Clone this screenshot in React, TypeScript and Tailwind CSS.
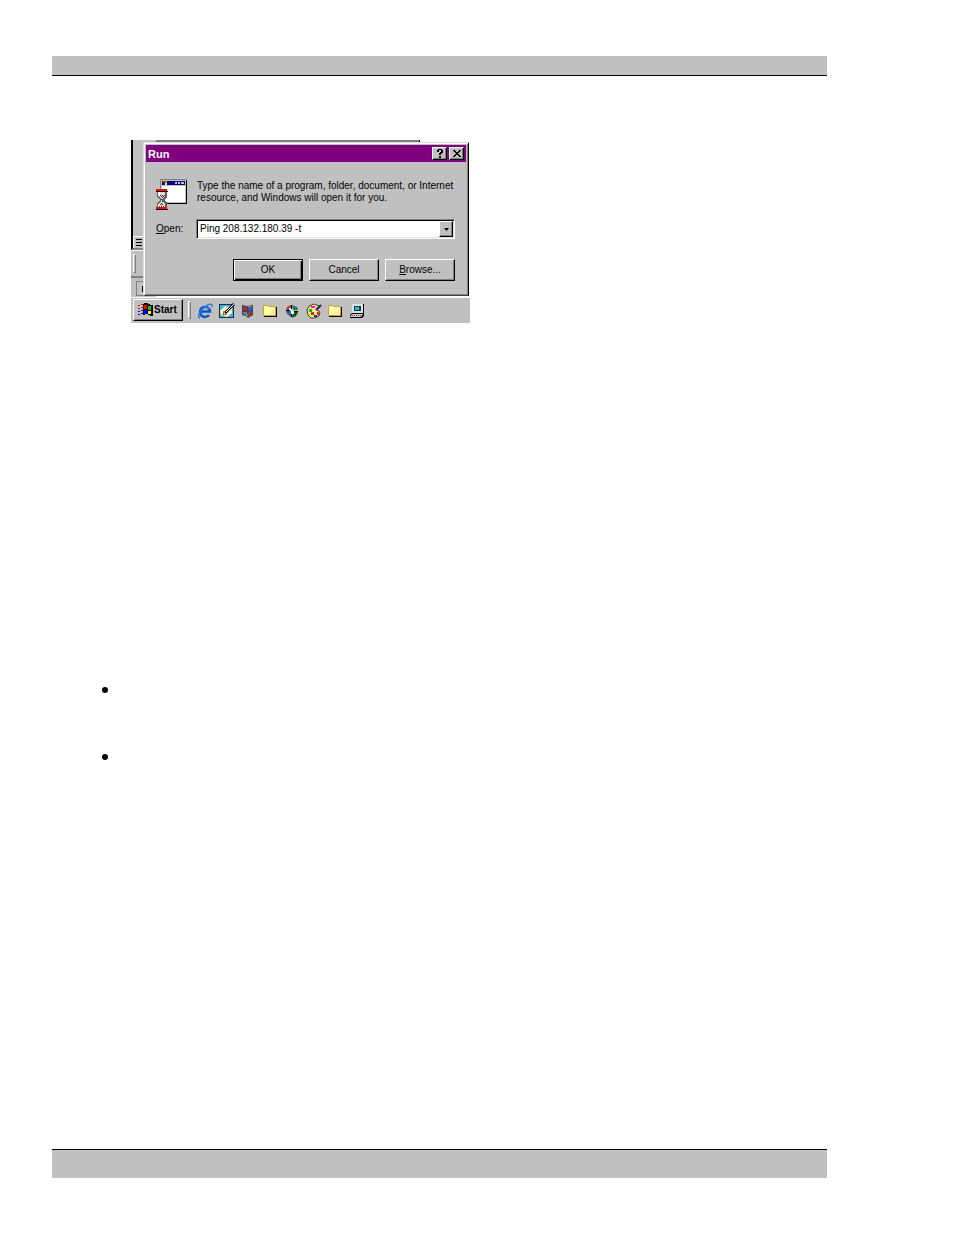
import type { ReactNode } from 'react'

const raised = 'border border-t-white border-l-white border-r-black border-b-black bg-[#c0c0c0] shadow-[inset_-1px_-1px_0_#808080]'

function ProgramIcon() {
  return (
    <svg className="w-8 h-8 shrink-0" viewBox="0 0 32 32" shapeRendering="crispEdges" aria-hidden="true">
      <path fill="#808080" d="M4 0h26v24H4z" />
      <path fill="#000" d="M30 1h1v24H5v-1h25z" />
      <path fill="#c0c0c0" d="M5 1h25v23H5z" />
      <path fill="#000080" d="M6 2h23v4H6z" />
      <path fill="#f00" d="M7 2h2v2H7z" />
      <path fill="#0c0" d="M9 2h2v2H9z" />
      <path fill="#00f" d="M7 4h2v2H7z" />
      <path fill="#ff0" d="M9 4h2v2H9z" />
      <path fill="#c0c0c0" d="M19 3h2v2h-2zM22 3h2v2h-2zM25 3h3v2h-3z" />
      <path fill="#fff" d="M6 7h23v16H6z" />
      <path fill="#000" d="M0 12h12v1H0zM0 30h12v1H0z" />
      <path fill="#f00" d="M0 10h11v2H0zM0 28h11v2H0z" />
      <path fill="#606060" d="M1 13h10v5l-3 3 3 3v4H1v-4l3-3-3-3z" />
      <path fill="#d8d8d8" d="M2 13h7v4l-3 3v2l3 3v3H2v-3l3-3v-2l-3-3z" />
      <path fill="#fff" d="M2 13h2v4H2zM2 25h2v3H2z" />
      <path fill="#303030" d="M4 16h1v1H4zM6 16h1v1H6zM8 16h1v1H8zM5 17h1v1H5zM7 17h1v1H7zM6 18h1v1H6zM5 20h1v1H5zM6 22h1v1H6zM5 24h1v1H5zM4 25h1v1H4zM6 25h1v1H6zM3 27h1v1H3zM5 27h1v1H5zM7 27h1v1H7z" />
    </svg>
  )
}

function WindowsFlag() {
  return (
    <svg className="w-4 h-4" viewBox="0 0 16 16" shapeRendering="crispEdges" aria-hidden="true">
      <path fill="#000" d="M6 2h1V1h4v1h2v1h3v11h-3v-1h-2v-1H8v1H6z" />
      <path fill="#f00" d="M7 3h3v4H7zM1 3h2v1H1zM4 2h2v1H4zM1 6h2v1H1zM4 5h2v1H4z" />
      <path fill="#0c0" d="M11 4h3v4h-3z" />
      <path fill="#00f" d="M7 8h3v4H7zM1 9h2v1H1zM4 8h2v1H4zM1 12h2v1H1zM4 11h2v1H4z" />
      <path fill="#ff0" d="M11 9h3v3h-3z" />
    </svg>
  )
}

function QuickIcon({ children }: { children: ReactNode }) {
  return (
    <svg className="w-4 h-4" viewBox="0 0 16 16" aria-hidden="true">
      {children}
    </svg>
  )
}

function Folder() {
  return (
    <QuickIcon>
      <path fill="#000" d="M2 13h12V4h1v10H2z" />
      <path fill="#c8a030" d="M1 4V3l1-1h4l1 1h7v10H1z" />
      <path fill="#ffffa8" d="M2 3h4l1 1h6v8H2z" />
      <path fill="#ffd8a0" d="M11 7h1v1h-1zM10 8h1v1h-1zM9 9h1v1H9zM11 9h1v1h-1zM8 10h1v1H8zM10 10h1v1h-1zM12 10h1v1h-1zM7 11h1v1H7zM9 11h1v1H9zM11 11h1v1h-1z" />
    </QuickIcon>
  )
}

const shortcuts = [
  {
    label: 'Internet Explorer',
    icon: (
      <QuickIcon>
        <path fill="none" stroke="#1058c8" strokeWidth="2.6" d="M4 8.500h9A5 5 0 1 0 12 12" />
        <path fill="none" stroke="#48b8f8" strokeWidth="1" d="M4 7.500A5 4.500 0 0 1 12 6" />
        <path fill="none" stroke="#1878e0" strokeWidth="1.300" d="M3 15C-1 14 4 6 9 3c4-3 7-2 6 1" />
      </QuickIcon>
    ),
  },
  {
    label: 'Outlook Express',
    icon: (
      <QuickIcon>
        <path fill="#103048" d="M0 1h15v14H0z" />
        <path fill="#48b0e8" d="M1 2h13v12H1z" />
        <path fill="#fff8c8" d="M1 8l5-5 7 2v5l-5 4-6-2z" />
        <path fill="none" stroke="#000" strokeWidth="2.500" d="M6 10l9-9" />
        <path fill="none" stroke="#fff" d="M7 9l8-8" />
        <path fill="none" stroke="#806010" d="M5 8l-1 4 4-1" />
      </QuickIcon>
    ),
  },
  {
    label: 'Windows',
    icon: (
      <QuickIcon>
        <path fill="#404050" d="M2 2l5 1 6-1v10l-5 3-2-2-4-1z" />
        <path fill="#a82830" d="M3 3l4 1v4H3z" />
        <path fill="#3058d0" d="M8 4l4-1v4L8 8z" />
        <path fill="#6880b0" d="M3 9h4v3l-4-1z" />
        <path fill="#a03838" d="M8 9l4-1v3l-4 3z" />
        <path fill="#68a060" d="M8 3h4v1H8zM6 11h2v2H6z" />
      </QuickIcon>
    ),
  },
  { label: 'Folder', icon: <Folder /> },
  {
    label: 'Channels',
    icon: (
      <QuickIcon>
        <path fill="#b83838" d="M2 7l1-3 4-2v5z" />
        <path fill="#188058" d="M8 2l5 2 1 3H9z" />
        <path fill="#206898" d="M2 8h5v6l-4-3z" />
        <path fill="#184818" d="M9 9h5l-2 4-4 2z" />
        <path fill="#f8f8f8" d="M5 5h3v3H5zM7 8h3v3H7z" />
        <path fill="#000" d="M7 2h1v4H7zM2 7h4v1H2zM10 8h4v1h-4zM7 11h1v3H7z" />
      </QuickIcon>
    ),
  },
  {
    label: 'Paint',
    icon: (
      <QuickIcon>
        <path fill="#f8f080" stroke="#484000" d="M1 7l2-4 5-2 5 2-2 4 3 2-1 4-4 2H5l-3-3z" />
        <path fill="#f0f" d="M5 3h4v2H5z" />
        <path fill="#0b2" d="M3 6h3v3H3z" />
        <path fill="#e22" d="M5 9h3v3H5zM11 9h2v3h-2z" />
        <path fill="#22e" d="M8 12h3v2H8z" />
        <path fill="none" stroke="#202060" strokeWidth="2" d="M15 2l-5 5" />
      </QuickIcon>
    ),
  },
  { label: 'Documents', icon: <Folder /> },
  {
    label: 'Computer',
    icon: (
      <QuickIcon>
        <path fill="#000" d="M3 1h12v10H3zM1 12l2-2h12v3l-2 2H1z" />
        <path fill="#e0e0e0" d="M3 1h11v9H3z" />
        <path fill="#004050" d="M5 3h7v5H5z" />
        <path fill="#18c8c8" d="M6 4h4v3H6z" />
        <path fill="#d0d0d0" d="M3 11h11l-2 3H1z" />
        <path stroke="#404040" strokeDasharray="1 1" d="M3 12.500h9" />
      </QuickIcon>
    ),
  },
]

function RunDialog() {
  return (
    <section
      role="dialog"
      aria-label="Run"
      className="absolute left-3 top-0.5 right-px h-[154px] p-px border border-t-[#dfdfdf] border-l-[#dfdfdf] border-r-black border-b-[#404040] bg-[#c0c0c0] shadow-[inset_1px_1px_0_#fff,inset_-1px_-1px_0_#808080]"
    >
      <header className="m-px flex h-[17px] items-center bg-[#800080] px-0.5">
        <h1 className="flex-1 text-[11px] leading-4 font-bold text-white">Run</h1>
        <button type="button" aria-label="Help" className={`flex h-[13px] w-[15px] items-center justify-center ${raised}`}>
          <svg className="w-[6px] h-[9px]" viewBox="0 0 6 9" shapeRendering="crispEdges" aria-hidden="true">
            <path d="M1 0h4v1h1v3H5v1H4v1H2V4h1V3h1V1H2v2H0V1h1zM2 7h2v2H2z" />
          </svg>
        </button>
        <button type="button" aria-label="Close" className={`ml-0.5 flex h-[13px] w-[15px] items-center justify-center ${raised}`}>
          <svg className="w-2 h-[7px]" viewBox="0 0 8 7" shapeRendering="crispEdges" aria-hidden="true">
            <path d="M0 0h2v1h1v1h2V1h1V0h2v1H7v1H6v1H5v1h1v1h1v1h1v1H6V6H5V5H3v1H2v1H0V6h1V5h1V4h1V3H2V2H1V1H0z" />
          </svg>
        </button>
      </header>

      <form className="pl-[11px] pr-3" onSubmit={(e) => e.preventDefault()}>
        <div className="flex gap-2 pt-4">
          <ProgramIcon />
          <p className="pl-px pt-px text-[10px] leading-3 whitespace-nowrap">
            Type the name of a program, folder, document, or Internet
            <br />
            resource, and Windows will open it for you.
          </p>
        </div>
        <div className="mt-2 flex items-center">
          <label htmlFor="command" className="w-10 text-[10px] leading-3">
            <u>O</u>pen:
          </label>
          <div className="flex h-5 flex-1 border border-t-[#808080] border-l-[#808080] border-r-white border-b-white bg-white shadow-[inset_1px_1px_0_#000,inset_-1px_-1px_0_#dfdfdf] p-px">
            <input id="command" defaultValue="Ping 208.132.180.39 -t" className="min-w-0 flex-1 bg-transparent pl-0.5 text-[10px] leading-4 outline-none" />
            <button type="button" aria-label="Show recent commands" className={`flex w-3.5 items-center justify-center ${raised}`}>
              <svg className="w-[5px] h-[3px]" viewBox="0 0 5 3" aria-hidden="true">
                <path d="M0 0h5L2.500 3z" />
              </svg>
            </button>
          </div>
        </div>
        <div className="mt-5 flex justify-end gap-1.5 text-[10px] leading-3">
          <button type="submit" className="h-[22px] w-[70px] border border-black bg-[#c0c0c0] shadow-[inset_1px_1px_0_#fff,inset_-1px_-1px_0_#000,inset_-2px_-2px_0_#808080]">
            OK
          </button>
          <button type="button" className={`h-[22px] w-[70px] ${raised}`}>
            Cancel
          </button>
          <button type="button" className={`h-[22px] w-[70px] ${raised}`}>
            <u>B</u>rowse...
          </button>
        </div>
      </form>
    </section>
  )
}

// slivers of the window that the dialog leaves uncovered
function WindowBehind() {
  return (
    <div className="flex h-[157px] items-start">
      <div className="flex h-full w-[25px] flex-col bg-[#c0c0c0]">
        <div className="flex h-[110px] flex-col justify-end border-l-2 border-b-2 border-l-black border-b-[#808080]">
          <div className="flex h-3 flex-col gap-px border-t border-l border-white pt-0.5 pl-0.5">
            <span className="h-px w-1.5 bg-black" />
            <span className="mt-px h-px w-1.5 bg-black" />
            <span className="mt-px h-px w-1.5 bg-black" />
          </div>
        </div>
        <div className="flex h-[26px] flex-col justify-center border-t border-white pl-0.5">
          <span className="h-[19px] w-[3px] border border-t-white border-l-white border-r-[#808080] border-b-[#808080]" />
        </div>
        <div className="h-[21px] border-t-2 border-[#808080] pt-[3px] pl-[5px]">
          <div className="h-[15px] border border-[#808080] pt-1 pl-[5px]">
            <span className="block h-1.5 w-px bg-black" />
          </div>
        </div>
      </div>
      <div className="h-0.5 w-[264px] border-r border-black bg-[#808080]" />
    </div>
  )
}

function Taskbar() {
  return (
    <nav className="flex h-[26px] items-start border-t border-white bg-[#c0c0c0] pt-px pl-0.5">
      <button type="button" className={`flex h-[22px] w-[50px] items-center gap-px pl-[3px] text-[10px] leading-4 font-bold ${raised}`}>
        <WindowsFlag />
        Start
      </button>
      <span className="mt-0.5 ml-[5px] h-[18px] w-[3px] border border-t-white border-l-white border-r-[#808080] border-b-[#808080]" />
      <ul className="mt-1 ml-1.5 flex w-[168px] justify-between">
        {shortcuts.map((s) => (
          <li key={s.label}>
            <button type="button" aria-label={s.label} className="block">
              {s.icon}
            </button>
          </li>
        ))}
      </ul>
    </nav>
  )
}

export default function App() {
  return (
    <div className="min-h-screen bg-white pt-14 pr-[127px] pb-14 pl-[52px] font-['Liberation_Sans',Arial,sans-serif] text-black">
      <header className="h-5 border-b border-black bg-[#c0c0c0]" />

      <main className="pt-16 pl-[79px]">
        <figure className="relative w-[339px]">
          <WindowBehind />
          <RunDialog />
          <Taskbar />
        </figure>
      </main>

      <ul className="mt-[364px] ml-[50px] flex flex-col gap-[61px]">
        <li className="size-1.5 rounded-full bg-black" />
        <li className="size-1.5 rounded-full bg-black" />
      </ul>

      <footer className="mt-[389px] h-[29px] border-t border-black bg-[#c0c0c0]" />
    </div>
  )
}
